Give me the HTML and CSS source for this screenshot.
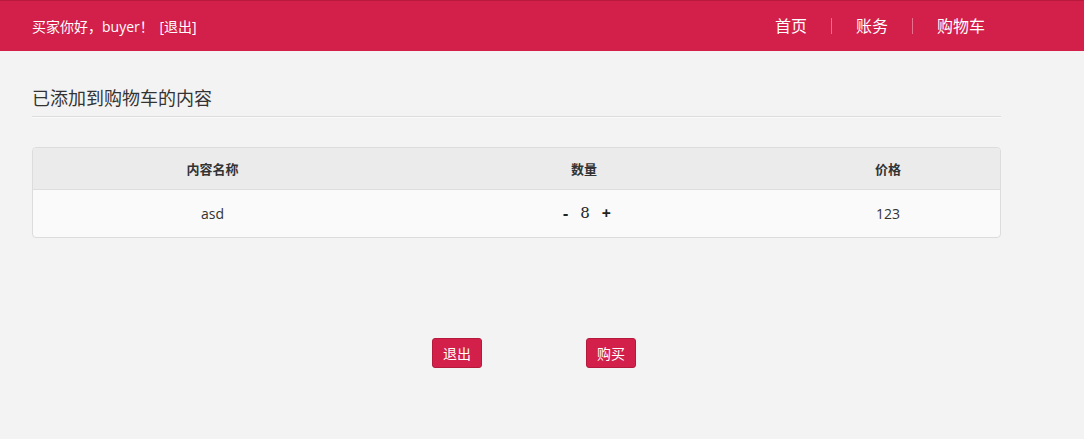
FILE: index.html
```html
<!DOCTYPE html>
<html lang="zh-CN">
<head>
<meta charset="utf-8">
<title>购物车</title>
<link rel="stylesheet" href="styles.css">
</head>
<body>
<header class="topbar">
  <div class="greet">买家你好，buyer！ <a class="logout-link" href="#">[退出]</a></div>
  <nav class="nav">
    <a class="nav-item" href="#">首页</a>
    <a class="nav-item" href="#">账务</a>
    <a class="nav-item" href="#">购物车</a>
  </nav>
</header>
<main class="main">
  <h2 class="title">已添加到购物车的内容</h2>
  <div class="table-wrap">
    <table class="cart">
      <thead>
        <tr><th class="c1">内容名称</th><th class="c2">数量</th><th class="c3">价格</th></tr>
      </thead>
      <tbody>
        <tr>
          <td>asd</td>
          <td><span class="qty"><span class="op">-</span><span class="num">8</span><span class="op">+</span></span></td>
          <td>123</td>
        </tr>
      </tbody>
    </table>
  </div>
  <div class="actions">
    <button class="btn">退出</button>
    <button class="btn">购买</button>
  </div>
</main>
</body>
</html>
```
FILE: styles.css
```css
* { box-sizing: border-box; }
html, body { margin: 0; padding: 0; }
body {
  background: #f3f3f3;
  font-family: "Open Sans", "Noto Sans CJK SC", sans-serif;
  color: #333;
  font-size: 14px;
}
.topbar {
  height: 51px;
  background: #d3204a;
  border-top: 1px solid #b81a3d;
  display: flex;
  align-items: center;
  justify-content: space-between;
  padding: 0 75px 0 32px;
  color: #fff;
}
.greet { font-size: 14px; color: #fff; }
.logout-link { color: #fff; text-decoration: none; margin-left: 2px; }
.nav { display: flex; align-items: center; }
.nav-item {
  color: #fff;
  text-decoration: none;
  font-size: 16px;
  padding: 0 24px;
  line-height: 16px;
  border-left: 1px solid #e8708c;
}
.nav-item:first-child { border-left: none; }
.main { padding: 0 83px 0 32px; }
.title {
  margin: 34px 0 0;
  font-size: 18px;
  font-weight: normal;
  color: #333;
  padding-bottom: 5px;
  border-bottom: 1px solid #dcdcdc;
  box-shadow: 0 1px 0 #fafafa;
  line-height: 26px;
}
.table-wrap {
  margin-top: 30px;
  border: 1px solid #dcdcdc;
  border-radius: 4px;
  overflow: hidden;
  background: #fafafa;
}
.cart { width: 100%; border-collapse: collapse; }
.cart th {
  background: #ebebeb;
  font-size: 13px;
  font-weight: bold;
  height: 41px;
  border-bottom: 1px solid #dedede;
  color: #333;
}
.cart td {
  text-align: center;
  height: 48px;
  font-size: 14px;
  color: #333;
}
.c1 { width: 359px; }
.c2 { width: 384px; }
.qty { font-weight: bold; font-size: 16px; color: #222; display: inline-flex; gap: 12px; align-items: center; padding-left: 6px; }
.num { font-family: "DejaVu Serif", serif; font-weight: normal; font-size: 15px; }
.actions {
  display: flex;
  gap: 104px;
  margin-top: 100px;
  padding-left: 400px;
}
.btn {
  width: 50px;
  height: 30px;
  background: #d3204a;
  border: 1px solid #b51a3c;
  border-radius: 3px;
  color: #fff;
  font-family: "Open Sans", "Noto Sans CJK SC", sans-serif;
  font-size: 14px;
  padding: 0;
}
```
